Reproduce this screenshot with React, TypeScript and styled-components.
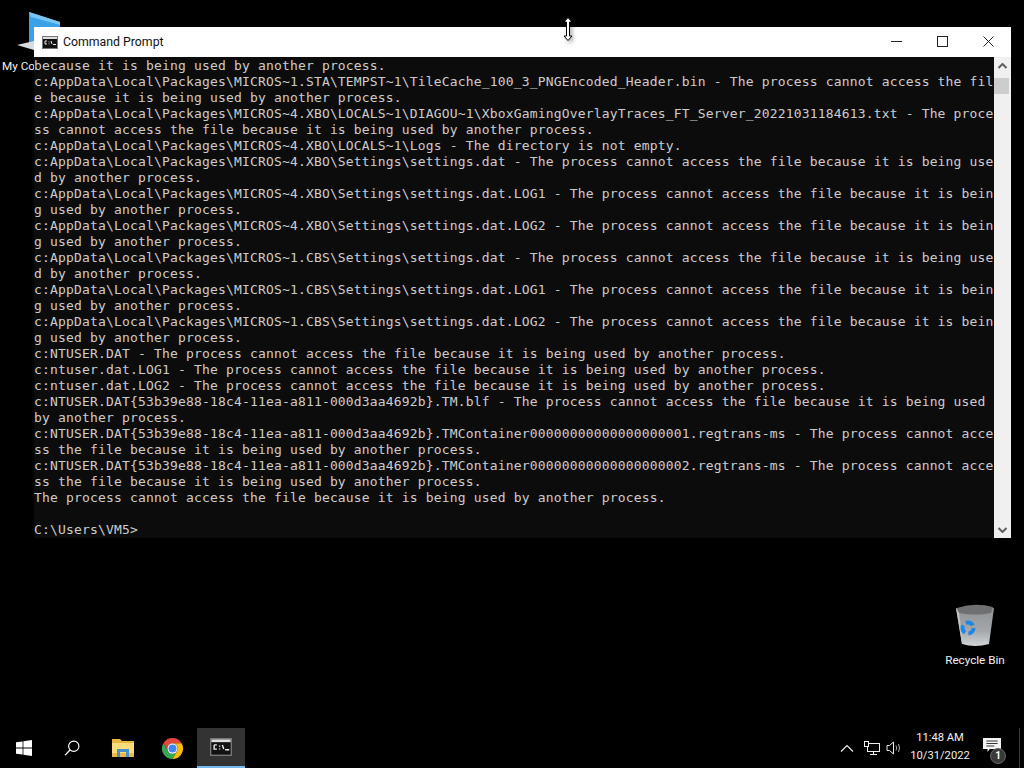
import React from "react";
import styled, { createGlobalStyle } from "styled-components";

const Global = createGlobalStyle`
  html, body { margin: 0; padding: 0; background: #000; }
  #root { width: 1024px; height: 768px; overflow: hidden; }
`;

const UI = `Roboto, "Open Sans", sans-serif`;

const Screen = styled.div`
  width: 1024px;
  height: 768px;
  display: flex;
  flex-direction: column;
  background: #000;
  overflow: hidden;
`;
const Desktop = styled.main`
  position: relative;
  flex: 1;
`;
const DesktopIcon = styled.div<{ $x: number; $y: number; $w: number; $gap: number; $start?: boolean }>`
  position: absolute;
  left: ${(p) => p.$x}px;
  top: ${(p) => p.$y}px;
  width: ${(p) => p.$w}px;
  display: flex;
  flex-direction: column;
  align-items: ${(p) => (p.$start ? "flex-start" : "center")};
  gap: ${(p) => p.$gap}px;
`;
const IconLabel = styled.span<{ $inset?: number }>`
  font: 11.7px/16px ${UI};
  color: #f2f2f2;
  white-space: nowrap;
  margin-left: ${(p) => p.$inset ?? 0}px;
`;
const Window = styled.section`
  position: absolute;
  left: 34px;
  top: 27px;
  width: 977px;
  height: 511px;
  display: flex;
  flex-direction: column;
  background: #0c0c0c;
`;
const TitleBar = styled.header`
  height: 30px;
  flex: none;
  display: flex;
  align-items: center;
  background: #fff;
  padding-left: 8px;
`;
const TitleText = styled.span`
  font: 12.3px/16px ${UI};
  color: #111;
  margin-left: 5px;
  flex: 1;
`;
const WinButton = styled.button`
  width: 46px;
  height: 30px;
  flex: none;
  border: 0;
  padding: 0 0 1px;
  background: transparent;
  display: flex;
  align-items: center;
  justify-content: center;
`;
const Body = styled.div`
  flex: 1;
  min-height: 0;
  display: flex;
`;
const Console = styled.pre`
  flex: 1;
  margin: 0;
  padding-top: 1px;
  overflow: hidden;
  font-family: "DejaVu Sans Mono", monospace;
  font-size: 13px;
  line-height: 16px;
  letter-spacing: 0.17px;
  color: #cccccc;
`;
const ScrollBar = styled.div`
  width: 17px;
  flex: none;
  background: #f0f0f0;
  display: flex;
  flex-direction: column;
  align-items: flex-start;
`;
const ScrollArrow = styled.div`
  height: 17px;
  flex: none;
  width: 100%;
  display: flex;
  align-items: center;
  justify-content: center;
`;
const ScrollThumb = styled.div`
  width: 15px;
  height: 16px;
  flex: none;
  margin-top: 4px;
  background: #cdcdcd;
`;
const ScrollSpace = styled.div`
  flex: 1;
`;
const CursorMark = styled.svg`
  position: absolute;
  left: 560px;
  top: 16px;
  filter: drop-shadow(2px 2px 2px rgba(0, 0, 0, 0.35));
`;
const Taskbar = styled.footer`
  height: 40px;
  flex: none;
  display: flex;
  align-items: stretch;
  background: #000;
`;
const TaskButton = styled.div<{ $active?: boolean; $gap?: number }>`
  width: 48px;
  flex: none;
  box-sizing: border-box;
  margin-left: ${(p) => p.$gap ?? 0}px;
  display: flex;
  align-items: center;
  justify-content: center;
  background: ${(p) => (p.$active ? "#333333" : "transparent")};
  border-bottom: 2px solid ${(p) => (p.$active ? "#76b9ed" : "transparent")};
  padding-top: ${(p) => (p.$active ? "0" : "2px")};
`;
const Spacer = styled.div`
  flex: 1;
`;
const Tray = styled.div`
  display: flex;
  align-items: center;
`;
const TrayIcon = styled.div<{ $w: number }>`
  width: ${(p) => p.$w}px;
  height: 40px;
  display: flex;
  align-items: center;
  justify-content: center;
`;
const Clock = styled.div`
  width: 72px;
  text-align: center;
  font: 11.2px/18px ${UI};
  color: #f0f0f0;
  padding-bottom: 2px;
`;
const Notify = styled.div`
  position: relative;
  width: 32px;
  height: 40px;
  display: flex;
  align-items: center;
  justify-content: center;
  padding-bottom: 5px;
  box-sizing: border-box;
`;
const Badge = styled.span`
  position: absolute;
  left: 14px;
  top: 20px;
  width: 16px;
  height: 16px;
  border-radius: 50%;
  background: #3a3a3a;
  border: 1px solid #666;
  box-sizing: border-box;
  color: #fff;
  font: 700 10px/14px ${UI};
  text-align: center;
`;
const Divider = styled.div`
  width: 1px;
  height: 40px;
  margin: 0 4px 0 11px;
  background: #3a3a3a;
`;

const lines = [
  "because it is being used by another process.",
  "c:AppData\\Local\\Packages\\MICROS~1.STA\\TEMPST~1\\TileCache_100_3_PNGEncoded_Header.bin - The process cannot access the fil",
  "e because it is being used by another process.",
  "c:AppData\\Local\\Packages\\MICROS~4.XBO\\LOCALS~1\\DIAGOU~1\\XboxGamingOverlayTraces_FT_Server_20221031184613.txt - The proce",
  "ss cannot access the file because it is being used by another process.",
  "c:AppData\\Local\\Packages\\MICROS~4.XBO\\LOCALS~1\\Logs - The directory is not empty.",
  "c:AppData\\Local\\Packages\\MICROS~4.XBO\\Settings\\settings.dat - The process cannot access the file because it is being use",
  "d by another process.",
  "c:AppData\\Local\\Packages\\MICROS~4.XBO\\Settings\\settings.dat.LOG1 - The process cannot access the file because it is bein",
  "g used by another process.",
  "c:AppData\\Local\\Packages\\MICROS~4.XBO\\Settings\\settings.dat.LOG2 - The process cannot access the file because it is bein",
  "g used by another process.",
  "c:AppData\\Local\\Packages\\MICROS~1.CBS\\Settings\\settings.dat - The process cannot access the file because it is being use",
  "d by another process.",
  "c:AppData\\Local\\Packages\\MICROS~1.CBS\\Settings\\settings.dat.LOG1 - The process cannot access the file because it is bein",
  "g used by another process.",
  "c:AppData\\Local\\Packages\\MICROS~1.CBS\\Settings\\settings.dat.LOG2 - The process cannot access the file because it is bein",
  "g used by another process.",
  "c:NTUSER.DAT - The process cannot access the file because it is being used by another process.",
  "c:ntuser.dat.LOG1 - The process cannot access the file because it is being used by another process.",
  "c:ntuser.dat.LOG2 - The process cannot access the file because it is being used by another process.",
  "c:NTUSER.DAT{53b39e88-18c4-11ea-a811-000d3aa4692b}.TM.blf - The process cannot access the file because it is being used",
  "by another process.",
  "c:NTUSER.DAT{53b39e88-18c4-11ea-a811-000d3aa4692b}.TMContainer00000000000000000001.regtrans-ms - The process cannot acce",
  "ss the file because it is being used by another process.",
  "c:NTUSER.DAT{53b39e88-18c4-11ea-a811-000d3aa4692b}.TMContainer00000000000000000002.regtrans-ms - The process cannot acce",
  "ss the file because it is being used by another process.",
  "The process cannot access the file because it is being used by another process.",
  "",
  "C:\\Users\\VM5>",
].join("\n");

const CmdIcon = ({ w, h }: { w: number; h: number }) => (
  <svg width={w} height={h} viewBox="0 0 16 13" preserveAspectRatio="none">
    <rect x="0.5" y="0.5" width="15" height="12" fill="#111" stroke="#777" />
    <rect x="1" y="1" width="14" height="2" fill="#ddd" />
    <path d="M3 5h2M3 5v3h2M7 5.5v.8M7 7.5v.8M9 5l1 3M11 8.5h3" stroke="#eee" strokeWidth="1" fill="none" />
  </svg>
);

export default function App() {
  return (
    <Screen>
      <Global />
      <Desktop>
        <DesktopIcon $x={0} $y={8} $w={74} $gap={6} $start>
          <svg width="74" height="44" viewBox="0 0 74 44">
            <path d="M29 4 L60 14 V40 L29 40Z" fill="#3aa0e8" />
            <path d="M29 4 L60 14 V17 L31 9Z" fill="#79c6f5" />
            <path d="M17 37 L34 33 V42Z" fill="#d9dde0" />
          </svg>
          <IconLabel $inset={2}>My Co</IconLabel>
        </DesktopIcon>
        <DesktopIcon $x={936} $y={603} $w={78} $gap={4}>
          <svg width="38" height="45" viewBox="0 0 38 45">
            <defs>
              <linearGradient id="binBody" x1="0" y1="0" x2="0" y2="1">
                <stop offset="0" stopColor="#8f9295" />
                <stop offset="0.6" stopColor="#a5a8ab" />
                <stop offset="1" stopColor="#d2d5d8" />
              </linearGradient>
            </defs>
            <path d="M0 5 L38 5 L33 41 Q19 45 6 41Z" fill="url(#binBody)" />
            <path d="M1 5 Q19 -1 37 4 L35 10 Q19 13 3 10Z" fill="#6e7072" />
            <path d="M0 5 L3 10 L7 41 L6 41Z" fill="#c3c6c9" />
            <circle cx="12" cy="25" r="5.5" fill="none" stroke="#1e86e6" strokeWidth="4" strokeDasharray="8 3.5" />
          </svg>
          <IconLabel>Recycle Bin</IconLabel>
        </DesktopIcon>
        <Window>
          <TitleBar>
            <CmdIcon w={16} h={13} />
            <TitleText>Command Prompt</TitleText>
            <WinButton>
              <svg width="11" height="11" viewBox="0 0 11 11"><path d="M0 5.5h11" stroke="#222" /></svg>
            </WinButton>
            <WinButton>
              <svg width="11" height="11" viewBox="0 0 11 11"><rect x="0.5" y="0.5" width="10" height="10" fill="none" stroke="#222" /></svg>
            </WinButton>
            <WinButton>
              <svg width="11" height="11" viewBox="0 0 11 11"><path d="M0.5 0.5l10 10M10.5 0.5l-10 10" stroke="#222" /></svg>
            </WinButton>
          </TitleBar>
          <Body>
            <Console>{lines}</Console>
            <ScrollBar>
              <ScrollArrow>
                <svg width="9" height="6" viewBox="0 0 9 6"><path d="M0.5 5L4.5 1l4 4" fill="none" stroke="#606060" strokeWidth="2" /></svg>
              </ScrollArrow>
              <ScrollThumb />
              <ScrollSpace />
              <ScrollArrow>
                <svg width="9" height="6" viewBox="0 0 9 6"><path d="M0.5 1L4.5 5l4-4" fill="none" stroke="#606060" strokeWidth="2" /></svg>
              </ScrollArrow>
            </ScrollBar>
          </Body>
        </Window>
        <CursorMark width="16" height="26" viewBox="0 0 16 26">
          <path d="M8 1.5L12 6H9.5V20H12L8 24.5L4 20H6.5V6H4Z" fill="#fff" stroke="#000" />
        </CursorMark>
      </Desktop>
      <Taskbar>
        <TaskButton>
          <svg width="16" height="16" viewBox="0 0 16 16">
            <path d="M0 2.3L6.6 1.4V7.6H0ZM7.4 1.3L16 0V7.6H7.4ZM0 8.4H6.6V14.6L0 13.7ZM7.4 8.4H16V16L7.4 14.7Z" fill="#fff" />
          </svg>
        </TaskButton>
        <TaskButton>
          <svg width="16" height="16" viewBox="0 0 18 18">
            <circle cx="11" cy="7" r="5.8" fill="none" stroke="#fff" strokeWidth="1.3" />
            <path d="M7 11L1.2 17" stroke="#fff" strokeWidth="1.5" />
          </svg>
        </TaskButton>
        <TaskButton $gap={3}>
          <svg width="22" height="18" viewBox="0 0 22 18">
            <path d="M0 0H8L10 2H22V18H0Z" fill="#e8b53e" />
            <path d="M0 4H22V18H0Z" fill="#fbdc7d" />
            <path d="M0 14H22V18H0Z" fill="#e9b949" />
            <path d="M5 18V10H17V18H14V13H8V18Z" fill="#4a90c8" />
          </svg>
        </TaskButton>
        <TaskButton $gap={1}>
          <svg width="23" height="23" viewBox="0 0 24 24">
            <path d="M12 1A11 11 0 0 1 21.53 6.5H12A5.5 5.5 0 0 0 7.24 14.75L2.47 6.5A11 11 0 0 1 12 1Z" fill="#e8453c" />
            <path d="M2.47 6.5L7.24 14.75A5.5 5.5 0 0 0 16.76 14.75L12 23A11 11 0 0 1 2.47 6.5Z" fill="#34a853" />
            <path d="M21.53 6.5A11 11 0 0 1 12 23L16.76 14.75A5.5 5.5 0 0 0 12 6.5Z" fill="#fbbc05" />
            <circle cx="12" cy="12" r="5.4" fill="#fff" />
            <circle cx="12" cy="12" r="4.2" fill="#4285f4" />
          </svg>
        </TaskButton>
        <TaskButton $active $gap={1}>
          <CmdIcon w={22} h={18} />
        </TaskButton>
        <Spacer />
        <Tray>
          <TrayIcon $w={26}>
            <svg width="14" height="8" viewBox="0 0 14 8"><path d="M1 7.5L7 1.5l6 6" fill="none" stroke="#eee" strokeWidth="1.2" /></svg>
          </TrayIcon>
          <TrayIcon $w={24}>
            <svg width="16" height="16" viewBox="0 0 16 16" fill="none" stroke="#eee">
              <rect x="3.5" y="3.5" width="12" height="8" />
              <path d="M9.5 11.5V14M6 14.5H13" />
              <rect x="0.5" y="1.5" width="4" height="5" fill="#000" />
            </svg>
          </TrayIcon>
          <TrayIcon $w={20}>
            <svg width="16" height="14" viewBox="0 0 16 14" fill="none" stroke="#eee">
              <path d="M1 4.5H3.5L7.5 1V13L3.5 9.5H1Z" />
              <path d="M10 4.5Q11.5 7 10 9.5M12.5 3Q14.5 7 12.5 11" stroke="#aaa" />
            </svg>
          </TrayIcon>
          <Clock>
            11:48 AM
            <br />
            10/31/2022
          </Clock>
          <Notify>
            <svg width="18" height="15" viewBox="0 0 16 15" preserveAspectRatio="none">
              <path d="M0 0H16V11H6L4 14V11H0Z" fill="#f4f4f4" />
              <path d="M3 3H13M3 5.5H13M3 8H10" stroke="#333" />
            </svg>
            <Badge>1</Badge>
          </Notify>
          <Divider />
        </Tray>
      </Taskbar>
    </Screen>
  );
}
